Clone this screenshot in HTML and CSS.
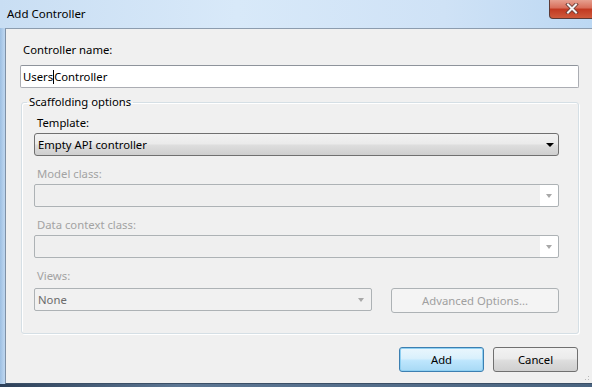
FILE: index.html
```html
<!DOCTYPE html>
<html lang="en">
<head>
  <meta charset="UTF-8">
  <title>Add Controller</title>
  <link rel="stylesheet" href="styles.css">
</head>
<body>
  <div class="window">
    <div class="titlebar">
      <span class="title">Add Controller</span>
      <div class="close-btn">
        <svg width="14" height="11" viewBox="0 0 14 11">
          <path d="M3 1.5 L11 9.5 M11 1.5 L3 9.5" stroke="#6b3b34" stroke-width="3.8" stroke-linecap="square"/>
          <path d="M3 1.5 L11 9.5 M11 1.5 L3 9.5" stroke="#f4f4f4" stroke-width="2" stroke-linecap="square"/>
        </svg>
      </div>
    </div>
    <div class="client">
      <label class="field-label top-label">Controller name:</label>
      <div class="textbox">Users<span class="caret"></span>Controller</div>

      <fieldset class="group">
        <legend>Scaffolding options</legend>

        <label class="field-label">Template:</label>
        <div class="combo">
          <span class="combo-text">Empty API controller</span>
          <span class="arrow"></span>
        </div>

        <label class="field-label disabled">Model class:</label>
        <div class="combo combo-disabled">
          <span class="combo-text"></span>
          <span class="drop-btn"><span class="arrow"></span></span>
        </div>

        <label class="field-label disabled">Data context class:</label>
        <div class="combo combo-disabled">
          <span class="combo-text"></span>
          <span class="drop-btn"><span class="arrow"></span></span>
        </div>

        <label class="field-label disabled views-label">Views:</label>
        <div class="views-row">
          <div class="combo combo-flat">
            <span class="combo-text">None</span>
            <span class="arrow"></span>
          </div>
          <button class="btn btn-disabled">Advanced Options...</button>
        </div>
      </fieldset>

      <div class="actions">
        <button class="btn btn-default">Add</button>
        <button class="btn">Cancel</button>
      </div>
      <div class="grip"></div>
    </div>
  </div>
</body>
</html>
```

FILE: styles.css
```css
html, body {
  margin: 0;
  padding: 0;
}
body {
  font-family: "Noto Sans", "Open Sans", sans-serif;
  font-size: 11.3px;
  color: #000;
  background: #bcd4ec;
  width: 592px;
  height: 387px;
  overflow: hidden;
}
.window {
  width: 592px;
  height: 387px;
  display: flex;
  flex-direction: column;
  background: linear-gradient(90deg, #9dbfe2 0px, #b9d3ee 4px, #c7dcf2 60px, #d6e7f8 300px, #cfe3f7 592px);
  position: relative;
}
.titlebar {
  height: 28px;
  display: flex;
  align-items: center;
  padding-left: 7px;
  box-sizing: border-box;
  background: linear-gradient(90deg, #c9def3 0%, #d8e9f9 40%, #cfe2f6 75%, #bcd8f3 100%);
}
.title {
  font-size: 11.5px;
  color: #000;
  margin-top: -1px;
}
.close-btn {
  position: absolute;
  top: -1px;
  right: -2px;
  width: 45px;
  height: 20px;
  border: 1px solid #5c3a36;
  border-top: none;
  border-radius: 0 0 0 4px;
  background: linear-gradient(180deg, #e8a696 0%, #d9705c 45%, #c23a22 55%, #cf5a3c 100%);
  display: flex;
  align-items: center;
  justify-content: center;
  box-sizing: border-box;
}
.client {
  flex: 1;
  margin-left: 5px;
  margin-bottom: 3px;
  background: #f0f0f0;
  border-left: 1px solid #7f91a6;
  border-top: 1px solid #8c9cae;
  border-bottom: 1px solid #3b4f66;
  padding: 13px 13px 0 14px;
  display: flex;
  flex-direction: column;
  position: relative;
  box-sizing: border-box;
}
.window::after {
  content: "";
  position: absolute;
  left: 0;
  right: 0;
  bottom: 0;
  height: 3px;
  background: linear-gradient(90deg, #2d4058, #5d7794 30%, #4a6480);
}
.field-label {
  display: block;
  height: 16px;
  line-height: 16px;
  padding-left: 3px;
  margin-bottom: 2px;
}
.top-label {
  margin-bottom: 7px;
}
.disabled {
  color: #a3a3a3;
}
.textbox {
  height: 23px;
  line-height: 21px;
  box-sizing: border-box;
  border: 1px solid #abadb3;
  border-top-color: #8e939b;
  border-radius: 2px;
  background: #fff;
  padding-left: 2px;
}
.caret {
  display: inline-block;
  width: 1px;
  height: 14px;
  background: #000;
  vertical-align: -3px;
}
.group {
  margin: 6px 0 0 1px;
  padding: 5px 19px 20px 12px;
  border: 1px solid #d5dfe5;
  border-radius: 3px;
  box-shadow: inset 1px 1px 0 #fff, 1px 1px 0 #fff;
  min-width: 0;
}
.group legend {
  padding: 0 2px;
  margin-left: -7px;
  line-height: 16px;
}
.combo {
  height: 23px;
  box-sizing: border-box;
  border: 1px solid #707070;
  border-radius: 3px;
  background: linear-gradient(180deg, #f2f2f2 0%, #ebebeb 45%, #dddddd 55%, #cfcfcf 100%);
  display: flex;
  align-items: center;
  margin-bottom: 10px;
}
.combo-text {
  flex: 1;
  padding-left: 3px;
  line-height: 21px;
}
.arrow {
  width: 0;
  height: 0;
  border-left: 4px solid transparent;
  border-right: 4px solid transparent;
  border-top: 4px solid #000;
  margin-right: 4px;
}
.combo-disabled {
  border-color: #adb2b5;
  background: #f0f0f0;
  border-radius: 2px;
}
.combo-disabled .combo-text {
  align-self: stretch;
  margin: 1px 0;
  background: #efefef;
}
.drop-btn {
  width: 18px;
  align-self: stretch;
  background: #fff;
  display: flex;
  align-items: center;
  justify-content: center;
  border-radius: 0 2px 2px 0;
}
.drop-btn .arrow {
  border-top-color: #a8a8a8;
  border-left-width: 3.5px;
  border-right-width: 3.5px;
  margin-right: 0;
}
.views-label {
  margin-bottom: 4px;
}
.views-row {
  display: flex;
  align-items: flex-start;
  gap: 19px;
}
.combo-flat {
  width: 338px;
  margin-bottom: 0;
  border-color: #adb2b5;
  border-radius: 2px;
  background: #f1f1f1;
}
.combo-flat .combo-text {
  color: #6b6b6b;
}
.combo-flat .arrow {
  border-top-color: #a8a8a8;
  border-left-width: 3.5px;
  border-right-width: 3.5px;
  margin-right: 7px;
}
.btn {
  font-family: inherit;
  font-size: 11.3px;
  height: 25px;
  width: 85px;
  box-sizing: border-box;
  border: 1px solid #707070;
  border-radius: 3px;
  background: linear-gradient(180deg, #f2f2f2 0%, #ebebeb 45%, #dddddd 55%, #cfcfcf 100%);
  color: #000;
  padding: 0;
}
.btn-disabled {
  flex: 1;
  border-color: #adb2b5;
  background: #f4f4f4;
  color: #a0a0a0;
}
.btn-default {
  border-color: #3c7fb1;
  background: linear-gradient(180deg, #eaf6fd 0%, #d9f0fc 45%, #bee6fd 55%, #a7d9f5 100%);
  box-shadow: inset 0 0 0 1px #8fd0f2;
}
.actions {
  display: flex;
  justify-content: flex-end;
  gap: 9px;
  margin-top: 13px;
  margin-right: 1px;
}
.grip {
  position: absolute;
  right: 1px;
  bottom: 1px;
  width: 10px;
  height: 10px;
  background: radial-gradient(circle, #b8b8b8 0.8px, transparent 1px) 0 0 / 3px 3px;
  clip-path: polygon(100% 0, 100% 100%, 0 100%);
}
```
